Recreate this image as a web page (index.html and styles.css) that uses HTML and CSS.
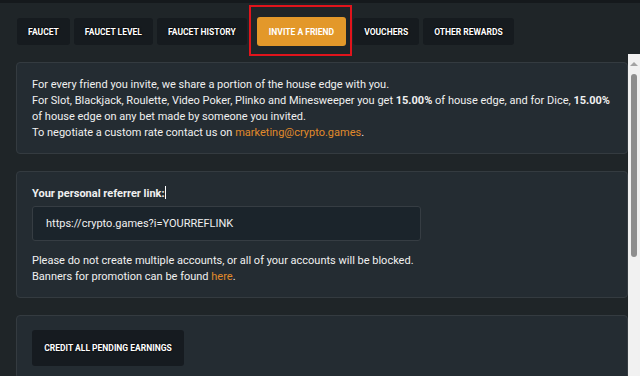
FILE: index.html
```html
<!DOCTYPE html>
<html lang="en">
<head>
  <meta charset="UTF-8" />
  <meta name="viewport" content="width=device-width, initial-scale=1.0" />
  <title>Invite a friend</title>
  <link rel="stylesheet" href="styles.css">
</head>
<body>
  <div class="topline"></div>

  <nav class="tabs">
    <button class="tab">FAUCET</button>
    <button class="tab">FAUCET LEVEL</button>
    <button class="tab">FAUCET HISTORY</button>
    <button class="tab active">INVITE A FRIEND</button>
    <button class="tab">VOUCHERS</button>
    <button class="tab">OTHER REWARDS</button>
  </nav>

  <div class="frame">
    <main class="content">
      <section class="panel">
        <p>For every friend you invite, we share a portion of the house edge with you.<br>
        For Slot, Blackjack, Roulette, Video Poker, Plinko and Minesweeper you get <b>15.00%</b> of house edge, and for Dice, <b>15.00%</b> of house edge on any bet made by someone you invited.<br>
        To negotiate a custom rate contact us on <a href="#">marketing@crypto.games</a>.</p>
      </section>

      <section class="panel">
        <div class="label">Your personal referrer link:<span class="caret"></span></div>
        <div class="ref-input">https://crypto.games?i=YOURREFLINK</div>
        <p class="note">Please do not create multiple accounts, or all of your accounts will be blocked.<br>
        Banners for promotion can be found <a href="#">here</a>.</p>
      </section>

      <section class="panel">
        <button class="credit-btn">CREDIT ALL PENDING EARNINGS</button>
      </section>
    </main>

    <div class="scrollbar">
      <div class="arrow"></div>
      <div class="thumb"></div>
    </div>
  </div>
</body>
</html>
```

FILE: styles.css
```css
:root {
  --bg: #1f2528;
  --panel: #242c32;
  --border: #343b40;
  --tab: #161b1f;
  --orange: #e3982a;
  --link: #e08a2a;
  --text: #f0f0f0;
}

html, body {
  height: 100%;
}

body {
  margin: 0;
  background: var(--bg);
  color: var(--text);
  font-family: Roboto, "Liberation Sans", sans-serif;
  font-size: 11px;
  display: flex;
  flex-direction: column;
  overflow: hidden;
}

.topline {
  height: 3px;
  background: #15191c;
}

.tabs {
  display: flex;
  align-items: center;
  height: 51px;
  padding: 6px 17px 0;
  box-sizing: border-box;
}

.tab {
  height: 27px;
  margin-right: 4px;
  padding: 0 11px;
  background: var(--tab);
  border: none;
  border-radius: 3px;
  color: #fff;
  font-family: Roboto, "Liberation Sans", sans-serif;
  font-size: 8.5px;
  font-weight: bold;
  text-shadow: 0 0 2px #000, 0 0 1px #000;
}

.tab.active {
  position: relative;
  height: 29px;
  margin: 0 7px 0 6px;
  padding: 0 12px;
  background: var(--orange);
  text-shadow: none;
}

.tab.active::after {
  content: "";
  position: absolute;
  left: -8px;
  right: -6px;
  top: -12px;
  bottom: -10px;
  border: 2px solid #e0141c;
}

.frame {
  flex: 1;
  display: flex;
  min-height: 0;
}

.content {
  flex: 1;
  padding: 8px 0 0 16px;
  overflow: hidden;
}

.panel {
  background: var(--panel);
  border: 1px solid var(--border);
  border-radius: 4px;
  padding: 14px 15px 12px;
  margin-bottom: 17px;
  line-height: 16px;
}

.panel p {
  margin: 0;
}

.panel a {
  color: var(--link);
  text-decoration: none;
}

.label {
  font-weight: bold;
}

.caret {
  display: inline-block;
  width: 1px;
  height: 13px;
  vertical-align: -2px;
  background: #fff;
}

.ref-input {
  width: 389px;
  height: 35px;
  box-sizing: border-box;
  margin-top: 4px;
  padding: 0 13px;
  line-height: 33px;
  background: #1b242b;
  border: 1px solid #363d43;
  border-radius: 3px;
}

.note {
  margin-top: 12px !important;
}

.credit-btn {
  width: 152px;
  height: 36px;
  background: #161b20;
  border: none;
  border-radius: 3px;
  color: #fff;
  font-family: Roboto, "Liberation Sans", sans-serif;
  font-size: 8.5px;
  font-weight: bold;
  text-shadow: 0 0 2px #000;
}

.scrollbar {
  width: 12px;
  background: #f1f1f1;
  display: flex;
  flex-direction: column;
  align-items: center;
  padding-top: 8px;
}

.arrow {
  width: 0;
  height: 0;
  border-left: 4px solid transparent;
  border-right: 4px solid transparent;
  border-bottom: 4px solid #a3a3a3;
}

.thumb {
  width: 6px;
  height: 183px;
  margin-top: 8px;
  background: #8e8e8e;
  border-radius: 3px;
}
```
